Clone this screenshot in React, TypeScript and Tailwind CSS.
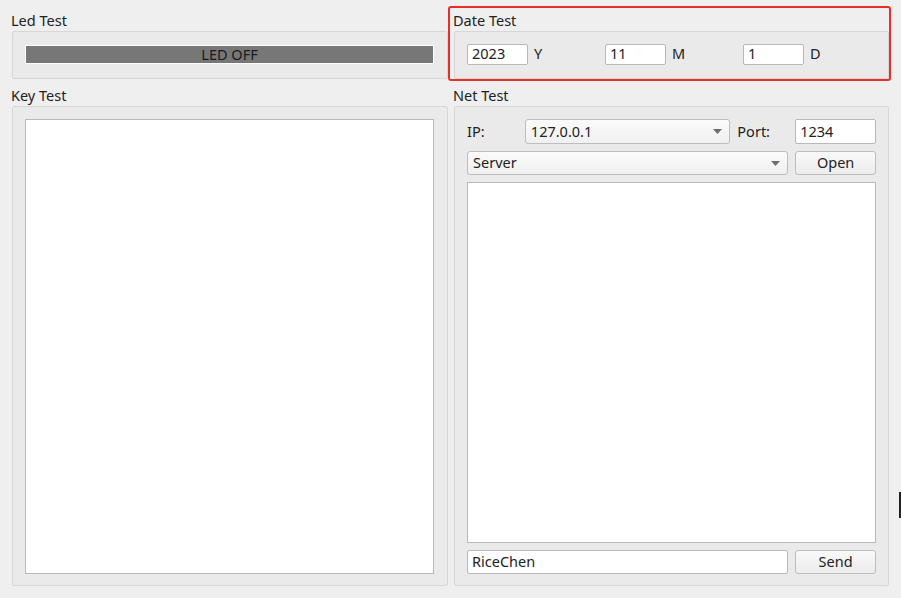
const font = { fontFamily: '"Noto Sans", "Open Sans", sans-serif' };

function Arrow() {
    return (
        <svg width="9" height="5" viewBox="0 0 9 5" className="shrink-0" aria-hidden="true">
            <path d="M0 0 H9 L4.5 5 Z" fill="#6e6e6e" />
        </svg>
    );
}

function Field({ value, className }: { value: string; className: string }) {
    return (
        <div
            className={`flex items-center rounded-[2px] border border-[#b8b8b8] bg-white px-[4px] text-[14.5px] text-[#222] ${className}`}
        >
            {value}
        </div>
    );
}

function Combo({ value, className }: { value: string; className: string }) {
    return (
        <div
            className={`flex items-center justify-between rounded-[3px] border border-[#bdbdbd] bg-gradient-to-b from-[#fbfbfb] to-[#f0f0f0] pl-[5px] pr-[7px] text-[14.5px] text-[#222] ${className}`}
        >
            <span>{value}</span>
            <Arrow />
        </div>
    );
}

function Button({ label }: { label: string }) {
    return (
        <div className="flex h-full w-[81px] items-center justify-center rounded-[3px] border border-[#bdbdbd] bg-gradient-to-b from-[#f9f9f9] to-[#ececec] text-[14.5px] text-[#222]">
            {label}
        </div>
    );
}

function Label({ text, h }: { text: string; h: string }) {
    return (
        <div className={`flex items-end pb-[1px] text-[14.5px] leading-[20px] text-[#222] ${h}`}>
            <span className="-ml-[1px]">{text}</span>
        </div>
    );
}

export default function App() {
    return (
        <div
            className="relative flex h-[598px] w-[901px] gap-[6px] overflow-hidden bg-[#efefef] pl-[12px]"
            style={font}
        >
            {/* Left column */}
            <div className="flex w-[436px] flex-col">
                <Label text="Led Test" h="h-[31px]" />
                <div className="h-[48px] rounded-[2px] border border-[#d7d7d7] bg-[#eaeaea] pl-[12px] pr-[13px] pt-[13px]">
                    <div className="flex h-[19px] items-center justify-center border border-white bg-[#777777] text-[14.5px] leading-none text-[#1a1a1a]">
                        LED OFF
                    </div>
                </div>
                <Label text="Key Test" h="h-[27px]" />
                <div className="h-[480px] rounded-[2px] border border-[#d7d7d7] bg-[#eaeaea] pb-[11px] pl-[12px] pr-[13px] pt-[12px]">
                    <div className="h-full border border-[#b9b9b9] bg-white" />
                </div>
            </div>

            {/* Right column */}
            <div className="relative flex w-[435px] flex-col">
                <Label text="Date Test" h="h-[31px]" />
                <div className="flex h-[48px] items-center rounded-[2px] border border-[#d7d7d7] bg-[#eaeaea] pl-[12px] pb-[2px]">
                    {[
                        ['2023', 'Y'],
                        ['11', 'M'],
                        ['1', 'D'],
                    ].map(([v, l]) => (
                        <div key={l} className="flex w-[138px] items-center">
                            <Field value={v} className="h-[21px] w-[61px]" />
                            <span className="ml-[6px] text-[14.5px] text-[#222]">{l}</span>
                        </div>
                    ))}
                </div>
                <Label text="Net Test" h="h-[27px]" />
                <div className="flex h-[480px] flex-col gap-[7px] rounded-[2px] border border-[#d7d7d7] bg-[#eaeaea] pb-[11px] pl-[12px] pr-[12px] pt-[12px]">
                    <div className="flex h-[25px] items-center">
                        <span className="w-[58px] text-[14.5px] text-[#222]">IP:</span>
                        <Combo value="127.0.0.1" className="h-full w-[206px]" />
                        <span className="ml-[7px] w-[58px] text-[14.5px] text-[#222]">Port:</span>
                        <Field value="1234" className="h-full w-[81px]" />
                    </div>
                    <div className="flex h-[24px] gap-[7px]">
                        <Combo value="Server" className="h-full w-[322px]" />
                        <Button label="Open" />
                    </div>
                    <div className="flex-1 border border-[#b9b9b9] bg-white" />
                    <div className="flex h-[24px] gap-[7px]">
                        <Field value="RiceChen" className="h-full w-[322px]" />
                        <Button label="Send" />
                    </div>
                </div>

                {/* highlight annotation */}
                <div className="pointer-events-none absolute left-[-6px] top-[6px] h-[75px] w-[443px] rounded-[3px] border-2 border-[#e8302a]" />
            </div>

            {/* edge marker */}
            <div className="absolute left-[899px] top-[492px] h-[26px] w-[2px] bg-[#222]" />
        </div>
    );
}
